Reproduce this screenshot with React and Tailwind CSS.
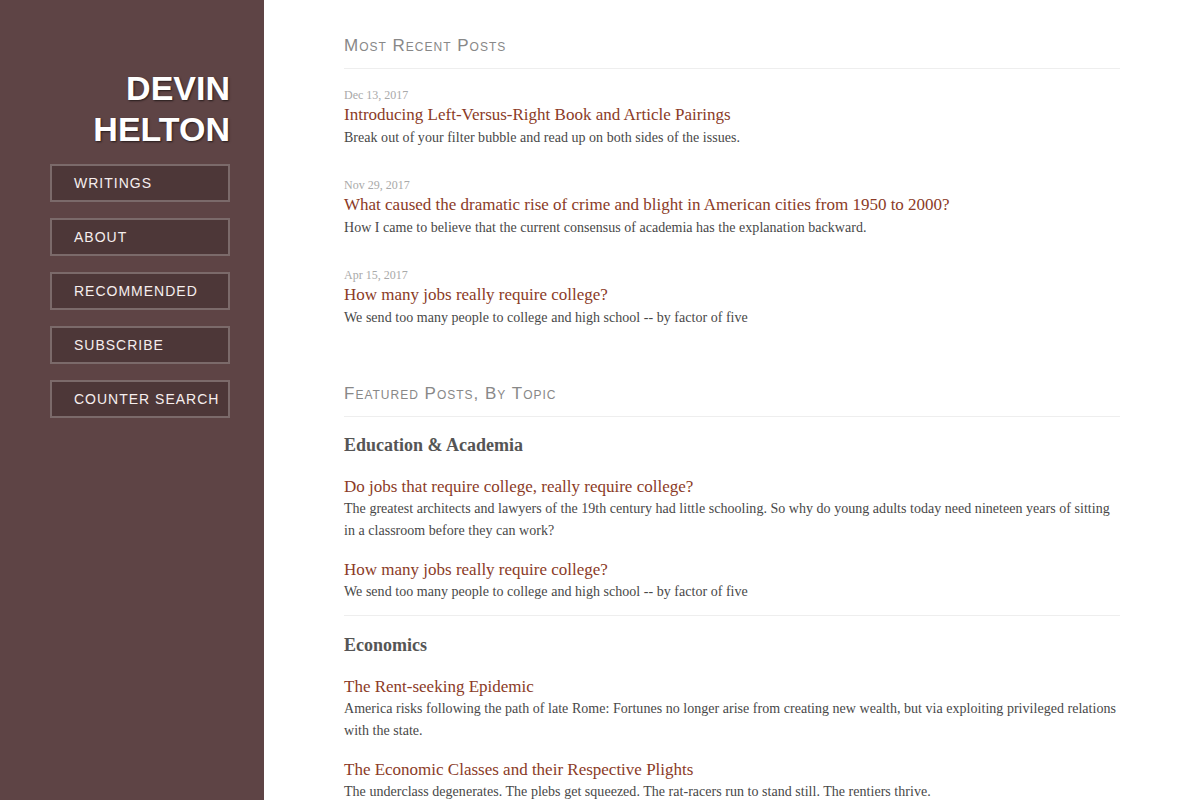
const nav = ["Writings", "About", "Recommended", "Subscribe", "Counter Search"];

const recent = [
  {
    date: "Dec 13, 2017",
    title: "Introducing Left-Versus-Right Book and Article Pairings",
    blurb: "Break out of your filter bubble and read up on both sides of the issues.",
  },
  {
    date: "Nov 29, 2017",
    title: "What caused the dramatic rise of crime and blight in American cities from 1950 to 2000?",
    blurb: "How I came to believe that the current consensus of academia has the explanation backward.",
  },
  {
    date: "Apr 15, 2017",
    title: "How many jobs really require college?",
    blurb: "We send too many people to college and high school -- by factor of five",
  },
];

const topics = [
  {
    name: "Education & Academia",
    posts: [
      {
        title: "Do jobs that require college, really require college?",
        blurb:
          "The greatest architects and lawyers of the 19th century had little schooling. So why do young adults today need nineteen years of sitting in a classroom before they can work?",
      },
      {
        title: "How many jobs really require college?",
        blurb: "We send too many people to college and high school -- by factor of five",
      },
    ],
  },
  {
    name: "Economics",
    posts: [
      {
        title: "The Rent-seeking Epidemic",
        blurb:
          "America risks following the path of late Rome: Fortunes no longer arise from creating new wealth, but via exploiting privileged relations with the state.",
      },
      {
        title: "The Economic Classes and their Respective Plights",
        blurb: "The underclass degenerates. The plebs get squeezed. The rat-racers run to stand still. The rentiers thrive.",
      },
    ],
  },
];

const SectionHeading = ({ children }) => (
  <h2 className="border-b border-[#eeeeee] pb-[11px] text-[17px] leading-[22px] tracking-[1px] text-[#888888] [font-variant:small-caps] font-['Liberation_Sans',Arial,sans-serif]">
    {children}
  </h2>
);

export default function App() {
  return (
    <div className="flex h-[800px] overflow-hidden bg-white font-['Liberation_Serif','Times_New_Roman',serif]">
      {/* Sidebar */}
      <aside className="w-[264px] shrink-0 bg-[#5e4445] pt-[68px] font-['Liberation_Sans',Arial,sans-serif]">
        <div className="flex w-[230px] flex-col items-end">
          <h1 className="text-right text-[34px] font-bold leading-[41px] text-white [text-shadow:1px_1px_2px_rgba(0,0,0,0.6)]">
            DEVIN
            <br />
            HELTON
          </h1>
        </div>
        <nav className="ml-[50px] mt-[14px] flex w-[180px] flex-col gap-[16px]">
          {nav.map((item) => (
            <a
              key={item}
              href="#"
              className="block h-[38px] border-2 border-[#7b6a6a] bg-[#4d3738] pl-[22px] text-[14px] uppercase leading-[34px] tracking-[1px] text-[#f6eeee]"
            >
              {item}
            </a>
          ))}
        </nav>
      </aside>

      {/* Main column */}
      <main className="ml-[80px] w-[776px] pt-[35px]">
        <SectionHeading>Most Recent Posts</SectionHeading>
        <div className="mt-[19px] flex flex-col gap-[29px]">
          {recent.map((p) => (
            <article key={p.title}>
              <div className="text-[12px] leading-[15px] text-[#a9a9a9]">{p.date}</div>
              <a href="#" className="block text-[17px] leading-[24px] text-[#8b3b27]">
                {p.title}
              </a>
              <p className="text-[14px] leading-[22px] tracking-[0.03px] text-[#484848]">{p.blurb}</p>
            </article>
          ))}
        </div>

        <div className="mt-[54px]">
          <SectionHeading>Featured Posts, By Topic</SectionHeading>
        </div>
        {topics.map((t, i) => (
          <section key={t.name} className={i > 0 ? "border-t border-[#eeeeee] pt-[17px]" : "pt-[16px]"}>
            <h3 className="text-[18px] font-bold leading-[24px] text-[#555555]">{t.name}</h3>
            <div className="mt-[19px] flex flex-col gap-[17px] pb-[12px]">
              {t.posts.map((p) => (
                <article key={p.title}>
                  <a href="#" className="block text-[17px] leading-[22px] text-[#8b3b27]">
                    {p.title}
                  </a>
                  <p className="text-[14px] leading-[22px] tracking-[0.03px] text-[#484848]">{p.blurb}</p>
                </article>
              ))}
            </div>
          </section>
        ))}
      </main>
    </div>
  );
}
